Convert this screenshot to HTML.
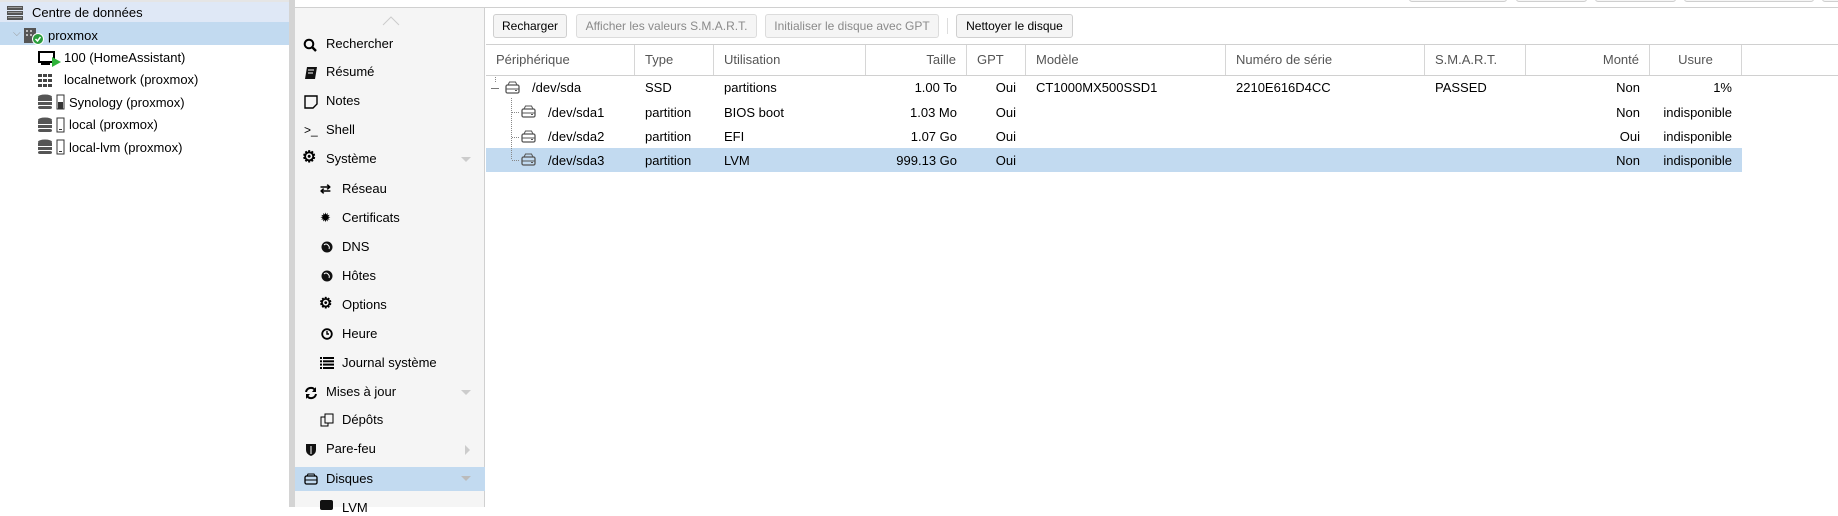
<!DOCTYPE html>
<html><head><meta charset="utf-8"><style>
*{box-sizing:border-box;margin:0;padding:0}
body{width:1838px;height:507px;overflow:hidden;background:#fff;font-family:"Liberation Sans",Arial,sans-serif;font-size:13px;color:#000;position:relative}
.a{position:absolute}
.t{position:absolute;white-space:nowrap;line-height:16px}
.btn{position:absolute;top:14px;height:24px;border:1px solid #cfcfcf;border-radius:3px;background:#f5f5f5;font-size:12px;line-height:22px;text-align:center;color:#000}
.dis{color:#8a8a8a;background:#f5f5f5;border-color:#dcdcdc}
.hd{position:absolute;top:45px;height:30px;line-height:30px;color:#555;font-size:13px;border-right:1px solid #d6d6d6;padding:0 10px}
.ni{position:absolute;left:326px;font-size:13px}
.si{position:absolute;left:342px;font-size:13px}
</style></head><body>
<div class="a" style="left:0;top:0;width:1838px;height:8px;background:#fff;border-bottom:1px solid #d0d0d0"></div>
<div class="a" style="left:0;top:0;width:294px;height:3px;background:#e5e5e5"></div>
<div class="a" style="left:1409px;top:-8px;width:98px;height:10px;border:1px solid #cfcfcf;border-radius:3px;background:#f5f5f5"></div>
<div class="a" style="left:1516px;top:-8px;width:71px;height:10px;border:1px solid #cfcfcf;border-radius:3px;background:#f5f5f5"></div>
<div class="a" style="left:1595px;top:-8px;width:81px;height:10px;border:1px solid #cfcfcf;border-radius:3px;background:#f5f5f5"></div>
<div class="a" style="left:1684px;top:-8px;width:130px;height:10px;border:1px solid #cfcfcf;border-radius:3px;background:#f5f5f5"></div>
<div class="a" style="left:1822px;top:-8px;width:30px;height:10px;border:1px solid #cfcfcf;border-radius:3px;background:#f5f5f5"></div>

<div class="a" style="left:0;top:2px;width:289px;height:20px;background:#dfe8f6"></div>
<div class="a" style="left:0;top:22px;width:289px;height:23px;background:#c2daf0"></div>
<svg class="a" style="left:5px;top:5px" width="20" height="16"><rect x="2" y="1" width="16" height="4" fill="#555"/><rect x="2" y="6" width="16" height="4" fill="#555"/><rect x="2" y="11" width="16" height="4" fill="#555"/><rect x="3" y="2" width="14" height="1" fill="#999"/><rect x="3" y="7" width="14" height="1" fill="#999"/><rect x="3" y="12" width="14" height="1" fill="#999"/></svg>
<div class="t" style="left:32px;top:5px">Centre de données</div>
<div class="t" style="left:13px;top:26px;color:#999;font-size:10px">⌵</div>
<svg class="a" style="left:23px;top:27px" width="22" height="18"><rect x="1" y="1" width="12" height="15" fill="#555"/><rect x="3" y="3" width="2" height="2" fill="#bbb"/><rect x="7" y="3" width="2" height="2" fill="#bbb"/><rect x="3" y="7" width="2" height="2" fill="#bbb"/><rect x="7" y="7" width="2" height="2" fill="#bbb"/><circle cx="15" cy="12" r="5.5" fill="#2a9d3c" stroke="#fff" stroke-width="1"/><path d="M12.5 12l2 2 3-4" stroke="#fff" stroke-width="1.5" fill="none"/></svg>
<div class="t" style="left:48px;top:28px">proxmox</div>
<svg class="a" style="left:38px;top:51px" width="24" height="16"><rect x="1" y="1" width="15" height="10" fill="#fff" stroke="#000" stroke-width="2"/><rect x="3" y="11" width="9" height="3" fill="#000"/><path d="M14 6l9 5-9 5z" fill="#2fb33a"/></svg>
<div class="t" style="left:64px;top:50px">100 (HomeAssistant)</div>
<svg class="a" style="left:38px;top:74px" width="16" height="14"><g fill="#444"><rect x="0" y="0" width="4" height="3"/><rect x="5" y="0" width="4" height="3"/><rect x="10" y="0" width="4" height="3"/><rect x="0" y="5" width="4" height="3"/><rect x="5" y="5" width="4" height="3"/><rect x="10" y="5" width="4" height="3"/><rect x="0" y="10" width="4" height="3"/><rect x="5" y="10" width="4" height="3"/><rect x="10" y="10" width="4" height="3"/></g></svg>
<div class="t" style="left:64px;top:72px">localnetwork (proxmox)</div>
<svg class="a" style="left:38px;top:94px" width="30" height="16"><ellipse cx="7" cy="3" rx="7" ry="2.5" fill="#555"/><rect x="0" y="4" width="14" height="3" fill="#555"/><rect x="0" y="8" width="14" height="3" fill="#555"/><rect x="0" y="12" width="14" height="3" rx="2" fill="#555"/><rect x="19" y="1" width="7" height="14" fill="#fff" stroke="#333"/><rect x="20" y="8" width="5" height="7" fill="#333"/></svg>
<div class="t" style="left:69px;top:95px">Synology (proxmox)</div>
<svg class="a" style="left:38px;top:117px" width="30" height="16"><ellipse cx="7" cy="3" rx="7" ry="2.5" fill="#555"/><rect x="0" y="4" width="14" height="3" fill="#555"/><rect x="0" y="8" width="14" height="3" fill="#555"/><rect x="0" y="12" width="14" height="3" rx="2" fill="#555"/><rect x="19" y="1" width="7" height="14" fill="#fff" stroke="#333"/><rect x="21" y="12" width="3" height="1" fill="#333"/></svg>
<div class="t" style="left:69px;top:117px">local (proxmox)</div>
<svg class="a" style="left:38px;top:139px" width="30" height="16"><ellipse cx="7" cy="3" rx="7" ry="2.5" fill="#555"/><rect x="0" y="4" width="14" height="3" fill="#555"/><rect x="0" y="8" width="14" height="3" fill="#555"/><rect x="0" y="12" width="14" height="3" rx="2" fill="#555"/><rect x="19" y="1" width="7" height="14" fill="#fff" stroke="#333"/><rect x="21" y="12" width="3" height="1" fill="#333"/></svg>
<div class="t" style="left:69px;top:140px">local-lvm (proxmox)</div>

<div class="a" style="left:289px;top:0;width:6px;height:507px;background:#d4d4d4"></div>

<div class="a" style="left:295px;top:8px;width:190px;height:499px;background:#f5f5f5;border-right:1px solid #d0d0d0"></div>
<svg class="a" style="left:382px;top:16px" width="18" height="10"><path d="M1 9l8-8 8 8" stroke="#ccc" fill="none"/></svg>
<svg class="a" style="left:303px;top:38px" width="14" height="14"><circle cx="6" cy="6" r="4.3" stroke="#000" stroke-width="2" fill="none"/><path d="M9 9l4 4" stroke="#000" stroke-width="2.4"/></svg>
<div class="t ni" style="top:36px">Rechercher</div>
<svg class="a" style="left:304px;top:66px" width="14" height="14"><path d="M3 1h10l-2 12H1z" fill="#111"/><path d="M4 4h6M4 7h5" stroke="#fff"/></svg>
<div class="t ni" style="top:64px">Résumé</div>
<svg class="a" style="left:304px;top:95px" width="14" height="14"><path d="M1 1h12v8l-4 4H1z" fill="none" stroke="#000" stroke-width="1.4"/></svg>
<div class="t ni" style="top:93px">Notes</div>
<div class="t" style="left:304px;top:122px;font-size:12px">&gt;_</div>
<div class="t ni" style="top:122px">Shell</div>
<div class="t" style="left:302px;top:150px;font-size:16px;font-weight:bold">⚙</div>
<div class="t ni" style="top:151px">Système</div>
<svg class="a" style="left:461px;top:157px" width="10" height="6"><path d="M0 0h10L5 5z" fill="#ccc"/></svg>
<div class="t" style="left:320px;top:181px;font-weight:bold">⇄</div>
<div class="t si" style="top:181px">Réseau</div>
<div class="t" style="left:320px;top:210px">✹</div>
<div class="t si" style="top:210px">Certificats</div>
<svg class="a" style="left:321px;top:241px" width="12" height="12"><circle cx="6" cy="6" r="5.5" fill="#111"/><path d="M3 4q2-2 4 0t1 4" stroke="#fff" fill="none"/></svg>
<div class="t si" style="top:239px">DNS</div>
<svg class="a" style="left:321px;top:270px" width="12" height="12"><circle cx="6" cy="6" r="5.5" fill="#111"/><path d="M3 4q2-2 4 0t1 4" stroke="#fff" fill="none"/></svg>
<div class="t si" style="top:268px">Hôtes</div>
<div class="t" style="left:319px;top:296px;font-size:15px;font-weight:bold">⚙</div>
<div class="t si" style="top:297px">Options</div>
<svg class="a" style="left:321px;top:328px" width="12" height="12"><circle cx="6" cy="6" r="4.8" stroke="#000" stroke-width="1.8" fill="none"/><path d="M6 3v3h2" stroke="#000" stroke-width="1.4" fill="none"/></svg>
<div class="t si" style="top:326px">Heure</div>
<svg class="a" style="left:320px;top:357px" width="14" height="12"><g fill="#000"><rect x="0" y="0" width="2" height="2"/><rect x="3" y="0" width="11" height="2"/><rect x="0" y="3.3" width="2" height="2"/><rect x="3" y="3.3" width="11" height="2"/><rect x="0" y="6.6" width="2" height="2"/><rect x="3" y="6.6" width="11" height="2"/><rect x="0" y="10" width="2" height="2"/><rect x="3" y="10" width="11" height="2"/></g></svg>
<div class="t si" style="top:355px">Journal système</div>
<svg class="a" style="left:304px;top:386px" width="14" height="14"><path d="M2 6a5 5 0 0 1 9-2M12 8a5 5 0 0 1-9 2" stroke="#000" stroke-width="2" fill="none"/><path d="M12 1v5H8z M2 13V8h4z" fill="#000"/></svg>
<div class="t ni" style="top:384px">Mises à jour</div>
<svg class="a" style="left:461px;top:390px" width="10" height="6"><path d="M0 0h10L5 5z" fill="#ccc"/></svg>
<svg class="a" style="left:320px;top:413px" width="14" height="14"><rect x="1" y="4" width="7" height="9" fill="none" stroke="#000"/><rect x="5" y="1" width="8" height="9" fill="#f5f5f5" stroke="#000"/></svg>
<div class="t si" style="top:412px">Dépôts</div>
<svg class="a" style="left:305px;top:443px" width="12" height="14"><path d="M1 1h10v6q0 4-5 6Q1 11 1 7z" fill="#111"/><path d="M6 3v8" stroke="#fff"/></svg>
<div class="t ni" style="top:441px">Pare-feu</div>
<svg class="a" style="left:465px;top:445px" width="6" height="10"><path d="M0 0v10l5-5z" fill="#ccc"/></svg>
<div class="a" style="left:295px;top:467px;width:190px;height:24px;background:#c2daf0"></div>
<svg class="a" style="left:304px;top:473px" width="14" height="12"><rect x="1" y="3" width="12" height="8" rx="1.5" fill="none" stroke="#000" stroke-width="1.3"/><path d="M1 7h12M3 3l1-2h6l1 2" stroke="#000" fill="none"/></svg>
<div class="t ni" style="top:471px">Disques</div>
<svg class="a" style="left:461px;top:476px" width="10" height="6"><path d="M0 0h10L5 5z" fill="#bbb"/></svg>
<div class="a" style="left:320px;top:500px;width:13px;height:10px;background:#111;border-radius:2px"></div>
<div class="t si" style="top:500px">LVM</div>

<div class="btn" style="left:493px;width:74px">Recharger</div>
<div class="btn dis" style="left:576px;width:181px">Afficher les valeurs S.M.A.R.T.</div>
<div class="btn dis" style="left:765px;width:174px">Initialiser le disque avec GPT</div>
<div class="a" style="left:947px;top:18px;width:1px;height:16px;background:#ddd"></div>
<div class="btn" style="left:956px;width:117px">Nettoyer le disque</div>

<div class="a" style="left:486px;top:44px;width:1352px;height:1px;background:#d0d0d0"></div>
<div class="a" style="left:486px;top:75px;width:1352px;height:1px;background:#d0d0d0"></div>
<div class="hd" style="left:486px;width:149px">Périphérique</div>
<div class="hd" style="left:635px;width:79px">Type</div>
<div class="hd" style="left:714px;width:152px">Utilisation</div>
<div class="hd" style="left:866px;width:101px;text-align:right">Taille</div>
<div class="hd" style="left:967px;width:59px">GPT</div>
<div class="hd" style="left:1026px;width:200px">Modèle</div>
<div class="hd" style="left:1226px;width:199px">Numéro de série</div>
<div class="hd" style="left:1425px;width:101px">S.M.A.R.T.</div>
<div class="hd" style="left:1526px;width:124px;text-align:right">Monté</div>
<div class="hd" style="left:1650px;width:92px;text-align:center">Usure</div>

<div class="a" style="left:486px;top:148px;width:1256px;height:24px;background:#c2daf0"></div>
<div class="a" style="left:495px;top:77px;height:5px;border-left:1px dotted #888"></div>
<div class="a" style="left:491px;top:88px;width:8px;height:1px;background:#777"></div>
<div class="a" style="left:511px;top:98px;height:61px;border-left:1px dotted #888"></div>
<div class="a" style="left:512px;top:112px;width:7px;border-top:1px dotted #888"></div>
<div class="a" style="left:512px;top:137px;width:7px;border-top:1px dotted #888"></div>
<div class="a" style="left:512px;top:160px;width:7px;border-top:1px dotted #888"></div>
<svg class="a" style="left:505px;top:81px" width="15" height="13"><rect x="1" y="4" width="13" height="8" rx="1.5" fill="none" stroke="#555" stroke-width="1.3"/><path d="M1 8h13M3 4l1.5-3h6L12 4" stroke="#555" fill="none"/><rect x="10" y="9" width="2" height="1" fill="#555"/></svg>
<svg class="a" style="left:521px;top:105px" width="15" height="13"><rect x="1" y="4" width="13" height="8" rx="1.5" fill="none" stroke="#555" stroke-width="1.3"/><path d="M1 8h13M3 4l1.5-3h6L12 4" stroke="#555" fill="none"/><rect x="10" y="9" width="2" height="1" fill="#555"/></svg>
<svg class="a" style="left:521px;top:130px" width="15" height="13"><rect x="1" y="4" width="13" height="8" rx="1.5" fill="none" stroke="#555" stroke-width="1.3"/><path d="M1 8h13M3 4l1.5-3h6L12 4" stroke="#555" fill="none"/><rect x="10" y="9" width="2" height="1" fill="#555"/></svg>
<svg class="a" style="left:521px;top:153px" width="15" height="13"><rect x="1" y="4" width="13" height="8" rx="1.5" fill="none" stroke="#555" stroke-width="1.3"/><path d="M1 8h13M3 4l1.5-3h6L12 4" stroke="#555" fill="none"/><rect x="10" y="9" width="2" height="1" fill="#555"/></svg>

<div class="t" style="left:532px;top:80px">/dev/sda</div>
<div class="t" style="left:645px;top:80px">SSD</div>
<div class="t" style="left:724px;top:80px">partitions</div>
<div class="t" style="left:866px;top:80px;width:91px;text-align:right">1.00 To</div>
<div class="t" style="left:967px;top:80px;width:49px;text-align:right">Oui</div>
<div class="t" style="left:1036px;top:80px">CT1000MX500SSD1</div>
<div class="t" style="left:1236px;top:80px">2210E616D4CC</div>
<div class="t" style="left:1435px;top:80px">PASSED</div>
<div class="t" style="left:1526px;top:80px;width:114px;text-align:right">Non</div>
<div class="t" style="left:1650px;top:80px;width:82px;text-align:right">1%</div>

<div class="t" style="left:548px;top:105px">/dev/sda1</div>
<div class="t" style="left:645px;top:105px">partition</div>
<div class="t" style="left:724px;top:105px">BIOS boot</div>
<div class="t" style="left:866px;top:105px;width:91px;text-align:right">1.03 Mo</div>
<div class="t" style="left:967px;top:105px;width:49px;text-align:right">Oui</div>
<div class="t" style="left:1526px;top:105px;width:114px;text-align:right">Non</div>
<div class="t" style="left:1650px;top:105px;width:82px;text-align:right">indisponible</div>

<div class="t" style="left:548px;top:129px">/dev/sda2</div>
<div class="t" style="left:645px;top:129px">partition</div>
<div class="t" style="left:724px;top:129px">EFI</div>
<div class="t" style="left:866px;top:129px;width:91px;text-align:right">1.07 Go</div>
<div class="t" style="left:967px;top:129px;width:49px;text-align:right">Oui</div>
<div class="t" style="left:1526px;top:129px;width:114px;text-align:right">Oui</div>
<div class="t" style="left:1650px;top:129px;width:82px;text-align:right">indisponible</div>

<div class="t" style="left:548px;top:153px">/dev/sda3</div>
<div class="t" style="left:645px;top:153px">partition</div>
<div class="t" style="left:724px;top:153px">LVM</div>
<div class="t" style="left:866px;top:153px;width:91px;text-align:right">999.13 Go</div>
<div class="t" style="left:967px;top:153px;width:49px;text-align:right">Oui</div>
<div class="t" style="left:1526px;top:153px;width:114px;text-align:right">Non</div>
<div class="t" style="left:1650px;top:153px;width:82px;text-align:right">indisponible</div>
</body></html>
